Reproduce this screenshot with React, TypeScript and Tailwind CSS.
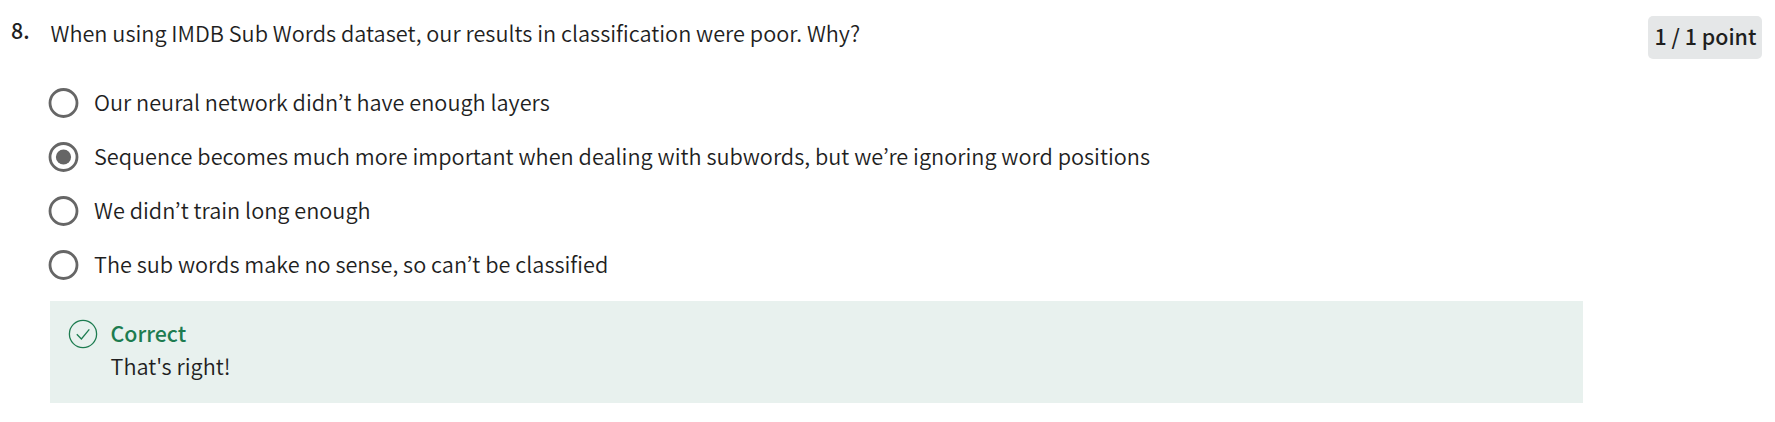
const options = [
  "Our neural network didn’t have enough layers",
  "Sequence becomes much more important when dealing with subwords, but we’re ignoring word positions",
  "We didn’t train long enough",
  "The sub words make no sense, so can’t be classified",
];
const selected = 1;

function Radio({ checked }: { checked: boolean }) {
  return (
    <svg className="h-[30px] w-[31px] shrink-0" viewBox="0 0 31 30" fill="none">
      <circle cx="15.5" cy="15" r="13.5" stroke="#666666" strokeWidth="2.8" />
      {checked && <circle cx="15.5" cy="15" r="7.6" fill="#666666" />}
    </svg>
  );
}

export default function App() {
  return (
    <div className="flex h-[422px] w-full items-start bg-white font-['Noto_Sans_CJK_KR',sans-serif] text-[21.7px] leading-[31px] font-[350] text-[#1f1f1f]">
      <div className="w-[50px] shrink-0 pt-[14px] pl-[11px] text-[21.4px] font-medium">8.</div>
      <main className="w-[1533px] shrink-0 pt-[17px]">
        <h2 className="pl-[0.5px]">
          When using IMDB Sub Words dataset, our results in classification were poor. Why?
        </h2>
        <div className="mt-[40px] -ml-[2px] flex flex-col gap-[24px]">
          {options.map((text, i) => (
            <label key={text} className="flex h-[30px] items-center gap-[15px]">
              <Radio checked={i === selected} />
              <span className="pb-[3px]">{text}</span>
            </label>
          ))}
        </div>
        <section className="mt-[21px] flex h-[102px] gap-[12.5px] bg-[#e8f1ee] pt-[18px] pl-[18px]">
          <svg className="size-[30px] shrink-0" viewBox="0 0 30 30" fill="none" stroke="#1d7c50" strokeWidth="1.3">
            <circle cx="15" cy="15" r="13.6" />
            <path d="M8.8 15.2 13.4 20 21.3 10.3" />
          </svg>
          <div className="-mt-[3px] leading-[33px]">
            <p className="text-[21.4px] font-medium text-[#1d7c50]">Correct</p>
            <p>That's right!</p>
          </div>
        </section>
      </main>
      <div className="mt-[16px] ml-[65px] flex h-[43px] w-[114px] shrink-0 items-center justify-center rounded-[5px] bg-[#e5e7e8] pb-[4px] pl-[1px] text-[21.4px] font-medium whitespace-nowrap">
        1 / 1 point
      </div>
    </div>
  );
}
